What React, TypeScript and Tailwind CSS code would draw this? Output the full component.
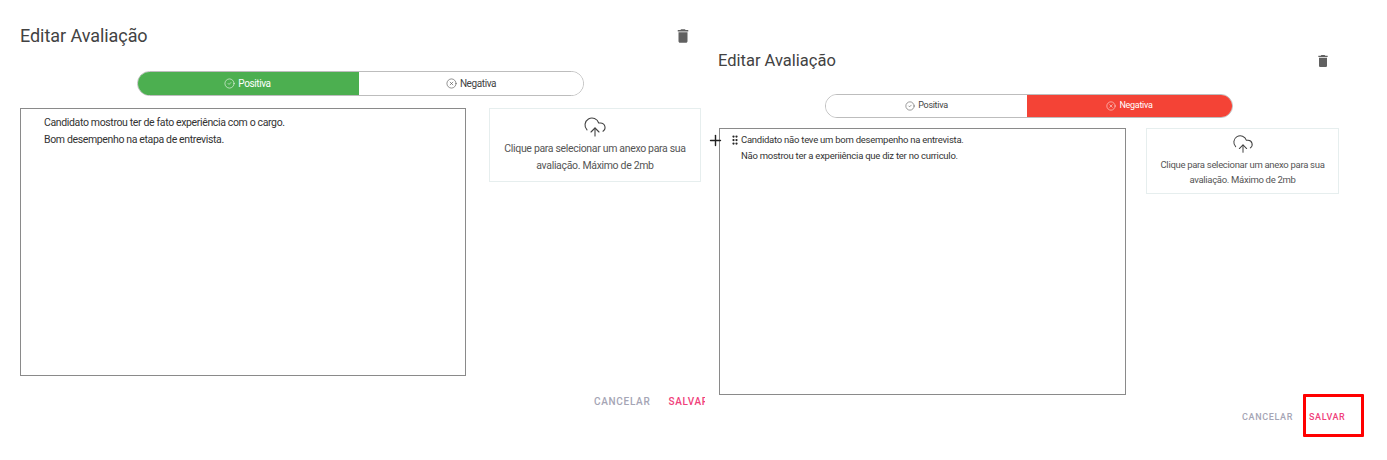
import { CircleCheck, CircleX, CloudUpload, GripVertical, Plus } from "lucide-react"
import { MdDelete } from "react-icons/md"

function UploadText() {
  return (
    <>
      Clique para selecionar um anexo para sua
      <br />
      avaliação. Máximo de 2mb
    </>
  )
}

function LeftPanel() {
  return (
    <div className="w-[705px] h-[460px] shrink-0 overflow-hidden pl-[20px] pt-[24px]">
      {/* Header */}
      <div className="flex items-center justify-between h-[24px] w-[672px]">
        <h1 className="text-[18px] leading-[24px] font-normal text-[#424242] tracking-[-0.06px]">Editar Avaliação</h1>
        <MdDelete className="w-[18px] h-[18px] text-[#616161]" />
      </div>

      {/* Toggle */}
      <div className="flex h-[25px] w-[447px] ml-[117px] mt-[23px] rounded-full border border-[#bdbdbd] overflow-hidden text-[10px] tracking-[-0.4px]">
        <div className="w-[221px] pr-[2px] bg-[#4caf50] text-white flex items-center justify-center gap-[3px]">
          <CircleCheck className="w-[11px] h-[11px]" strokeWidth={1.25} />
          Positiva
        </div>
        <div className="flex-1 bg-white text-[#424242] flex items-center justify-center gap-[3px]">
          <CircleX className="w-[11px] h-[11px]" strokeWidth={1.25} />
          Negativa
        </div>
      </div>

      {/* Body */}
      <div className="flex items-start mt-[12px]">
        <div className="w-[446px] h-[268px] border border-[#8a8a8a] pl-[23px] pt-[5px] text-[10.5px] leading-[17px] text-[#333333] tracking-[-0.36px]">
          <p>Candidato mostrou ter de fato experiência com o cargo.</p>
          <p>Bom desempenho na etapa de entrevista.</p>
        </div>
        <div className="w-[212px] h-[74px] ml-[23px] border border-[#e6eeee] flex flex-col items-center pt-[6px] text-[10.5px] leading-[17px] text-[#555555] text-center tracking-[-0.33px]">
          <CloudUpload className="w-[24px] h-[24px] text-[#424242]" strokeWidth={1.1} />
          <p className="mt-[1px]">
            <UploadText />
          </p>
        </div>
      </div>

      {/* Actions */}
      <div className="flex items-center mt-[19px] ml-[574px] gap-[18px] text-[10px] leading-[14px] font-medium tracking-[0.7px] whitespace-nowrap">
        <span className="text-[#a5a5b5]">CANCELAR</span>
        <span className="text-[#f0407a]">SALVAR</span>
      </div>
    </div>
  )
}

function RightPanel() {
  return (
    <div className="w-[682px] h-[460px] shrink-0 pl-[13px] pt-[49px]">
      {/* Header */}
      <div className="flex items-center justify-between h-[24px] w-[613px]">
        <h1 className="text-[16.5px] leading-[24px] font-normal text-[#424242]">Editar Avaliação</h1>
        <MdDelete className="w-[16px] h-[16px] text-[#616161]" />
      </div>

      {/* Toggle */}
      <div className="flex h-[24px] w-[408px] ml-[107px] mt-[21px] rounded-full border border-[#bdbdbd] overflow-hidden text-[9px] tracking-[-0.3px]">
        <div className="w-[201px] bg-white text-[#424242] flex items-center justify-center gap-[3px]">
          <CircleCheck className="w-[10px] h-[10px]" strokeWidth={1.25} />
          Positiva
        </div>
        <div className="flex-1 bg-[#f44336] text-white flex items-center justify-center gap-[3px]">
          <CircleX className="w-[10px] h-[10px]" strokeWidth={1.25} />
          Negativa
        </div>
      </div>

      {/* Body */}
      <div className="relative flex items-start mt-[10px] ml-[1px]">
        <Plus className="absolute left-[-12px] top-[4px] w-[17px] h-[17px] text-[#212121]" strokeWidth={2} />
        <div className="w-[407px] h-[267px] border border-[#8a8a8a] pl-[10px] pt-[3px] text-[9.5px] leading-[16px] text-[#333333] tracking-[-0.25px]">
          <div className="flex items-center">
            <GripVertical className="w-[12px] h-[12px] -ml-[1px] text-[#212121]" strokeWidth={2.5} />
            <p>Candidato não teve um bom desempenho na entrevista.</p>
          </div>
          <p className="pl-[11px]">Não mostrou ter a experiiência que diz ter no curriculo.</p>
        </div>
        <div className="w-[193px] h-[66px] ml-[20px] border border-[#e6eeee] flex flex-col items-center pt-[4px] text-[9.5px] leading-[15px] text-[#555555] text-center tracking-[-0.3px]">
          <CloudUpload className="w-[22px] h-[22px] text-[#424242]" strokeWidth={1.1} />
          <p className="mt-[2px]">
            <UploadText />
          </p>
        </div>
      </div>

      {/* Actions */}
      <div className="flex items-center -mt-[1px] ml-[524px] gap-[10px] text-[9px] leading-[14px] font-medium tracking-[0.65px] whitespace-nowrap">
        <span className="pt-[3px] text-[#a5a5b5]">CANCELAR</span>
        <span className="w-[61px] h-[43px] border-[3px] border-[#ff0000] rounded-[1px] flex items-center pl-[3px] pt-[3px] text-[#f0407a]">SALVAR</span>
      </div>
    </div>
  )
}

export default function App() {
  return (
    <div className="flex w-[1387px] h-[460px] bg-white overflow-hidden font-['Roboto',sans-serif]">
      <LeftPanel />
      <RightPanel />
    </div>
  )
}
